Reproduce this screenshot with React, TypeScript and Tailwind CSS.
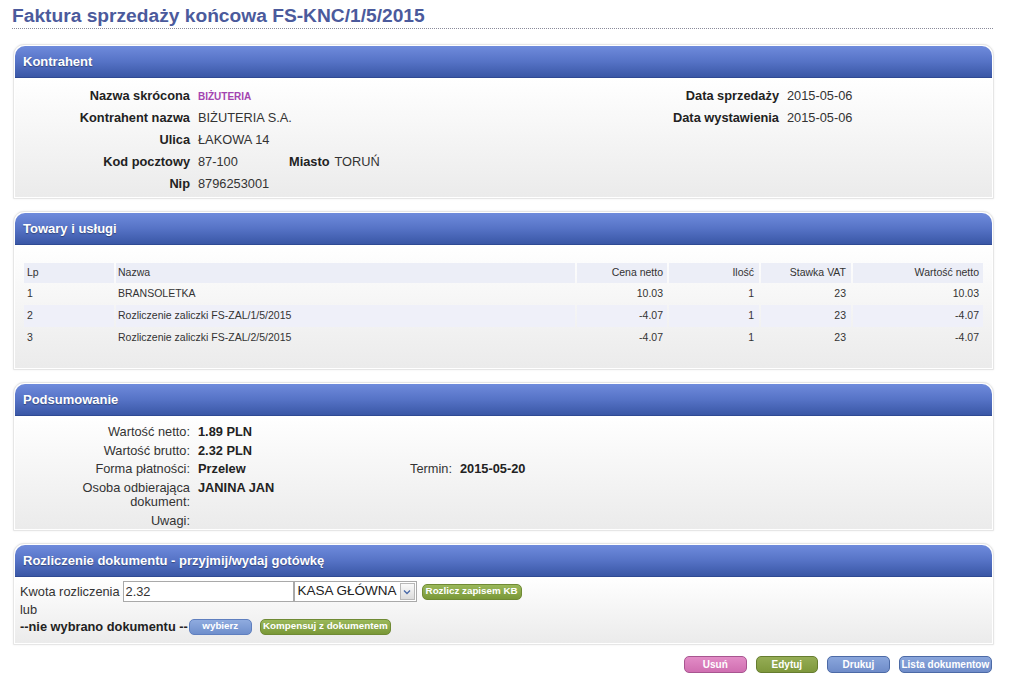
import React from 'react';

// --- Data ---
const items = [
  { lp: 1, name: 'BRANSOLETKA', cena: '10.03', ilosc: 1, vat: 23, wartosc: '10.03' },
  { lp: 2, name: 'Rozliczenie zaliczki FS-ZAL/1/5/2015', cena: '-4.07', ilosc: 1, vat: 23, wartosc: '-4.07' },
  { lp: 3, name: 'Rozliczenie zaliczki FS-ZAL/2/5/2015', cena: '-4.07', ilosc: 1, vat: 23, wartosc: '-4.07' },
];

const font = "font-['Liberation_Sans',Arial,sans-serif]";

// --- Panel ---
const Panel: React.FC<{ title: string; bodyClass: string; children: React.ReactNode }> = ({ title, bodyClass, children }) => (
  <section className="rounded-t-[11px] border border-[#e6e6e6] bg-white p-px shadow-[0_0_2px_rgba(0,0,0,0.08)]">
    <div className="flex h-[32px] items-center rounded-t-[10px] border-b border-[#2f4a93] bg-gradient-to-b from-[#6f8bdc] via-[#5673c6] to-[#3a57a6] px-[8px] text-[13px] font-bold text-white [text-shadow:0_1px_1px_rgba(0,0,0,0.35)]">
      {title}
    </div>
    <div className={`bg-gradient-to-b from-[#ffffff] to-[#ebebeb] ${bodyClass}`}>{children}</div>
  </section>
);

const SmallBtn: React.FC<{ color: 'green' | 'blue'; w: string; children: React.ReactNode }> = ({ color, w, children }) => (
  <span
    className={`inline-flex h-[16px] items-center justify-center whitespace-nowrap rounded-[5px] border text-[9.8px] font-bold text-white ${w} ${
      color === 'green'
        ? 'border-[#6f8a34] bg-gradient-to-b from-[#9ab85a] to-[#7a9838]'
        : 'border-[#5f7fbf] bg-gradient-to-b from-[#8fabdf] to-[#6f8fcc]'
    }`}
  >
    {children}
  </span>
);

const ActionBtn: React.FC<{ cls: string; children: React.ReactNode }> = ({ cls, children }) => (
  <span className={`inline-flex h-[17px] items-center justify-center whitespace-nowrap rounded-[5px] border text-[10px] font-bold text-white ${cls}`}>
    {children}
  </span>
);

export default function App() {
  return (
    <div className={`h-[689px] w-[1024px] overflow-hidden bg-white ${font} text-[#333]`}>
      {/* Title */}
      <div className="ml-[12px] w-[981px] border-b border-dotted border-[#8a8a9a] pt-[4px]">
        <h1 className="text-[19.2px] font-bold leading-[24px] text-[#4b5a9c]">Faktura sprzedaży końcowa FS-KNC/1/5/2015</h1>
      </div>

      <div className="ml-[13px] mt-[15px] flex w-[981px] flex-col gap-[12px]">
        {/* Kontrahent */}
        <Panel title="Kontrahent" bodyClass="h-[119px] pt-[7px]">
          <div className="flex text-[12.8px]">
            <div className="w-[586px]">
              {[
                ['Nazwa skrócona', <span className="text-[10px] font-semibold text-[#a344b0]">BIŻUTERIA</span>],
                ['Kontrahent nazwa', 'BIŻUTERIA S.A.'],
                ['Ulica', 'ŁAKOWA 14'],
                [
                  'Kod pocztowy',
                  <span className="flex">
                    <span className="w-[91px]">87-100</span>
                    <span className="font-bold text-[#222]">Miasto</span>
                    <span className="ml-[5px]">TORUŃ</span>
                  </span>,
                ],
                ['Nip', '8796253001'],
              ].map(([label, value], i) => (
                <div key={i} className="flex h-[22px] items-center">
                  <span className="w-[175px] text-right font-bold text-[#222]">{label}</span>
                  <span className="ml-[8px]">{value}</span>
                </div>
              ))}
            </div>
            <div>
              {[
                ['Data sprzedaży', '2015-05-06'],
                ['Data wystawienia', '2015-05-06'],
              ].map(([label, value]) => (
                <div key={label} className="flex h-[22px] items-center">
                  <span className="w-[178px] text-right font-bold text-[#222]">{label}</span>
                  <span className="ml-[8px]">{value}</span>
                </div>
              ))}
            </div>
          </div>
        </Panel>

        {/* Towary i usługi */}
        <Panel title="Towary i usługi" bodyClass="h-[123px] px-[7px] pt-[18px]">
          <table className="w-full border-separate border-spacing-x-[2px] border-spacing-y-0 text-[10.5px] text-[#333]">
            <thead>
              <tr className="h-[20px]">
                <th className="w-[90px] bg-[#eceef7] pl-[3px] text-left font-normal">Lp</th>
                <th className="bg-[#eceef7] pl-[2px] text-left font-normal">Nazwa</th>
                <th className="w-[90px] bg-[#eceef7] pr-[4px] text-right font-normal">Cena netto</th>
                <th className="w-[90px] bg-[#eceef7] pr-[5px] text-right font-normal">Ilość</th>
                <th className="w-[90px] bg-[#eceef7] pr-[5px] text-right font-normal">Stawka VAT</th>
                <th className="w-[130px] bg-[#eceef7] pr-[4px] text-right font-normal">Wartość netto</th>
              </tr>
            </thead>
            <tbody>
              {items.map((it, i) => (
                <tr key={it.lp} className={`h-[22px] ${i === 1 ? 'bg-[#eff0f9]' : ''}`}>
                  <td className="pl-[3px]">{it.lp}</td>
                  <td className="pl-[2px]">{it.name}</td>
                  <td className="pr-[4px] text-right">{it.cena}</td>
                  <td className="pr-[5px] text-right">{it.ilosc}</td>
                  <td className="pr-[5px] text-right">{it.vat}</td>
                  <td className="pr-[4px] text-right">{it.wartosc}</td>
                </tr>
              ))}
            </tbody>
          </table>
        </Panel>

        {/* Podsumowanie */}
        <Panel title="Podsumowanie" bodyClass="h-[113px] pt-[7px]">
          <div className="flex flex-col text-[12.8px] leading-[14.5px]">
            {[
              ['Wartość netto:', '1.89 PLN'],
              ['Wartość brutto:', '2.32 PLN'],
              ['Forma płatności:', 'Przelew'],
              ['Osoba odbierająca dokument:', 'JANINA JAN'],
              ['Uwagi:', ''],
            ].map(([label, value], i) => (
              <div key={label} className="flex py-[2px]">
                <span className="w-[175px] pl-[60px] text-right text-[#333]">{label}</span>
                <span className="ml-[8px] w-[212px] font-bold text-[#222]">{value}</span>
                {i === 2 && (
                  <>
                    <span className="text-[#333]">Termin:</span>
                    <span className="ml-[8px] font-bold text-[#222]">2015-05-20</span>
                  </>
                )}
              </div>
            ))}
          </div>
        </Panel>

        {/* Rozliczenie */}
        <Panel title="Rozliczenie dokumentu - przyjmij/wydaj gotówkę" bodyClass="h-[66px] px-[5px] pt-[4px]">
          <div className="flex items-center text-[12.8px]">
            <span className="text-[#333]">Kwota rozliczenia</span>
            <span className="ml-[3px] flex h-[21px] w-[171px] items-center border border-[#a9a9a9] bg-white px-[2px]">2.32</span>
            <span className="flex h-[21px] w-[123px] items-center justify-between whitespace-nowrap border border-[#a9a9a9] bg-white pl-[3px] text-[13.5px] text-[#222]">
              KASA GŁÓWNA
              <span className="mr-px flex h-[17px] w-[15px] shrink-0 items-center justify-center border border-[#b8b8b8] bg-gradient-to-b from-[#fafafa] to-[#dcdcdc]">
                <svg width="8" height="6" viewBox="0 0 8 6">
                  <path d="M1 1.5 L4 4.5 L7 1.5" fill="none" stroke="#4a6aa8" strokeWidth="1.4" />
                </svg>
              </span>
            </span>
            <span className="ml-[5px] flex">
              <SmallBtn color="green" w="w-[100px]">Rozlicz zapisem KB</SmallBtn>
            </span>
          </div>
          <div className="mt-[1px] text-[12.8px] leading-[14px] text-[#333]">lub</div>
          <div className="flex items-center text-[12.8px]">
            <span className="font-bold text-[#222]">--nie wybrano dokumentu --</span>
            <span className="ml-[1px] flex">
              <SmallBtn color="blue" w="w-[63px]">wybierz</SmallBtn>
            </span>
            <span className="ml-[8px] flex">
              <SmallBtn color="green" w="w-[131px]">Kompensuj z dokumentem</SmallBtn>
            </span>
          </div>
        </Panel>
      </div>

      {/* Bottom actions */}
      <div className="ml-[684px] mt-[11px] flex w-[308px] gap-[9px]">
        <ActionBtn cls="w-[63px] border-[#a85590] bg-gradient-to-b from-[#e28cc6] to-[#d06fb1]">Usuń</ActionBtn>
        <ActionBtn cls="w-[63px] border-[#667d30] bg-gradient-to-b from-[#95ad55] to-[#7f983c]">Edytuj</ActionBtn>
        <ActionBtn cls="w-[63px] border-[#4c6aa6] bg-gradient-to-b from-[#8aa6dc] to-[#6f8cc9]">Drukuj</ActionBtn>
        <ActionBtn cls="w-[94px] border-[#4c6aa6] bg-gradient-to-b from-[#8aa6dc] to-[#6f8cc9]">Lista dokumentow</ActionBtn>
      </div>
    </div>
  );
}
